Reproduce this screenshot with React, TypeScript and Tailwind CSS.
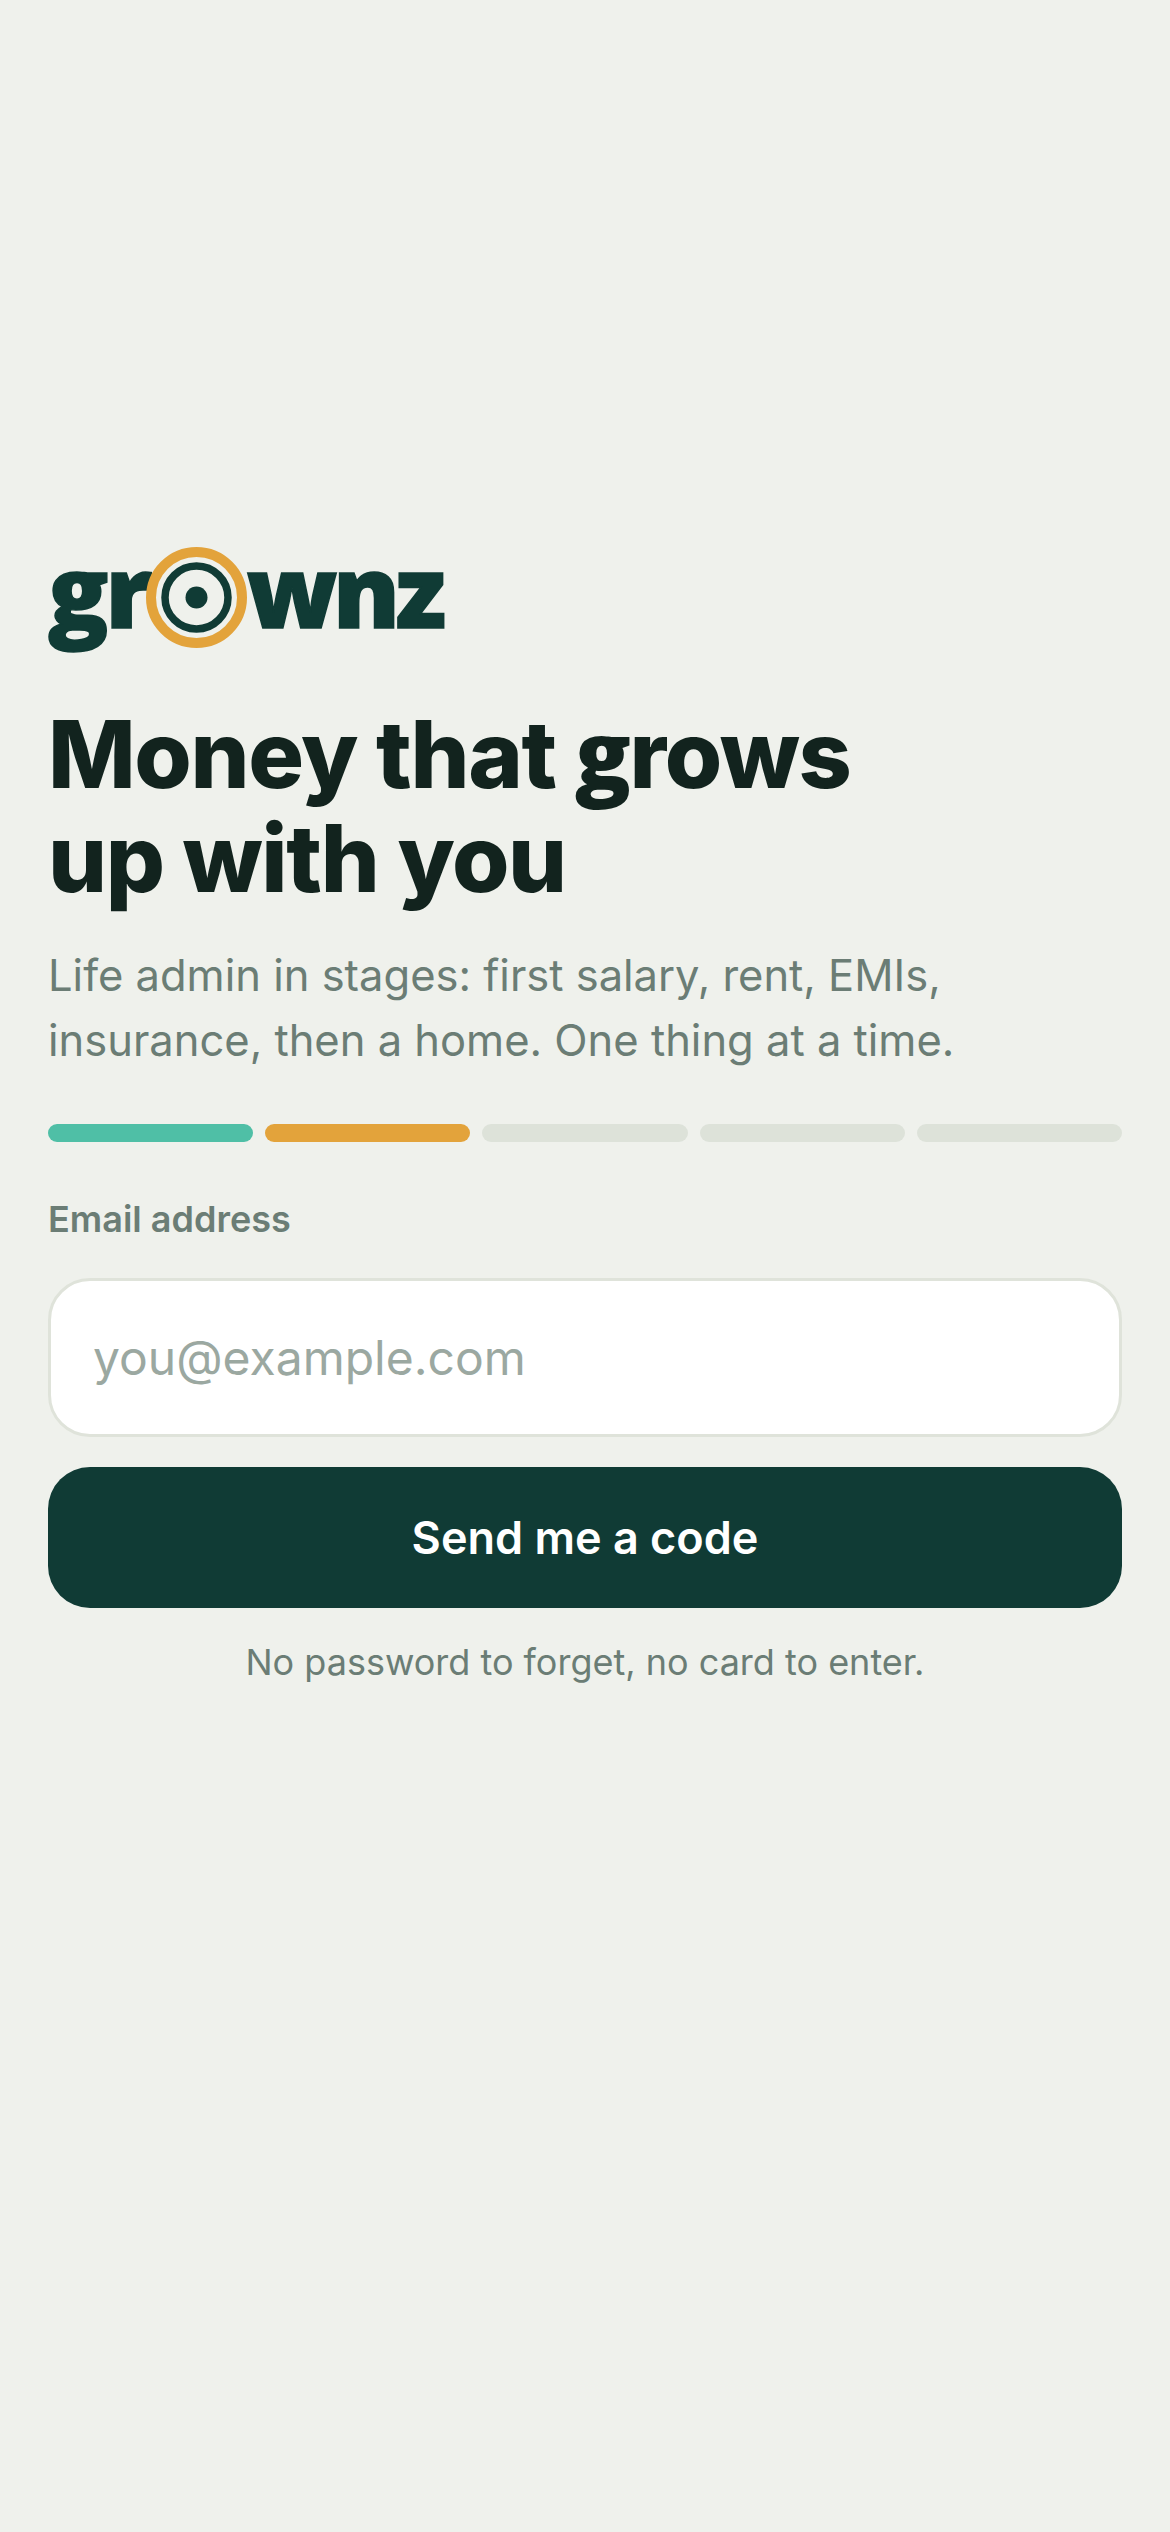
const STAGES = [
  "bg-[#4FBFA6]",
  "bg-[#E3A33B]",
  "bg-[#DDE2D9]",
  "bg-[#DDE2D9]",
  "bg-[#DDE2D9]",
];

function Logo() {
  return (
    <div className="flex h-[101px] items-center text-[#103B35] font-['Open_Sans',sans-serif] font-extrabold text-[100px] leading-none [-webkit-text-stroke:1.5px_#103B35]">
      <span className="mt-[-18px] tracking-[-3px]">gr</span>
      <svg className="relative ml-[-4px] shrink-0" width="101" height="101" viewBox="0 0 101 101" fill="none">
        <circle cx="50.5" cy="50.5" r="45.5" stroke="#E3A33B" strokeWidth="10" fill="#EFF1EC" />
        <circle cx="50.5" cy="50.5" r="31.5" stroke="#103B35" strokeWidth="7.5" />
        <circle cx="50.5" cy="50.5" r="11" fill="#103B35" />
      </svg>
      <span className="mt-[-18px] tracking-[-4.5px]">wnz</span>
    </div>
  );
}

export default function App() {
  return (
    <div className="min-h-[2532px] bg-[#EFF1EC] px-12 pt-[547px] font-['Inter',sans-serif]">
      <Logo />

      <h1 className="mt-[52px] text-[93px] font-extrabold leading-[104px] tracking-[-1.4px] text-[#12231E]">
        Money that <span className="font-['Open_Sans',sans-serif]">g</span>rows
        <br />
        up with you
      </h1>

      <p className="mt-[33px] text-[43.5px] leading-[65px] text-[#6B7D75]">
        Life admin in stages: first salary, rent, EMIs,
        <br />
        insurance, then a home. One thing at a time.
      </p>

      <div className="mt-[51px] flex gap-3">
        {STAGES.map((color, i) => (
          <div key={i} className={`h-[18px] flex-1 rounded-[9px] ${color}`} />
        ))}
      </div>

      <label className="mt-[50px] block text-[36px] font-semibold leading-[54px] text-[#6B7D75]">
        Email address
      </label>

      <input
        type="email"
        placeholder="you@example.com"
        className="mt-[32px] block h-[159px] w-full rounded-[42px] border-[3px] border-[#DFE3DA] bg-white px-[42px] text-[48px] text-[#12231E] outline-none placeholder:text-[#9BA8A1]"
      />

      <button className="mt-[30px] block h-[141px] w-full rounded-[42px] bg-[#103B35] text-[45px] font-semibold text-white">
        Send me a code
      </button>

      <p className="mt-[27px] text-center text-[36px] leading-[54px] text-[#6B7D75]">
        No password to forget, no card to enter.
      </p>
    </div>
  );
}
